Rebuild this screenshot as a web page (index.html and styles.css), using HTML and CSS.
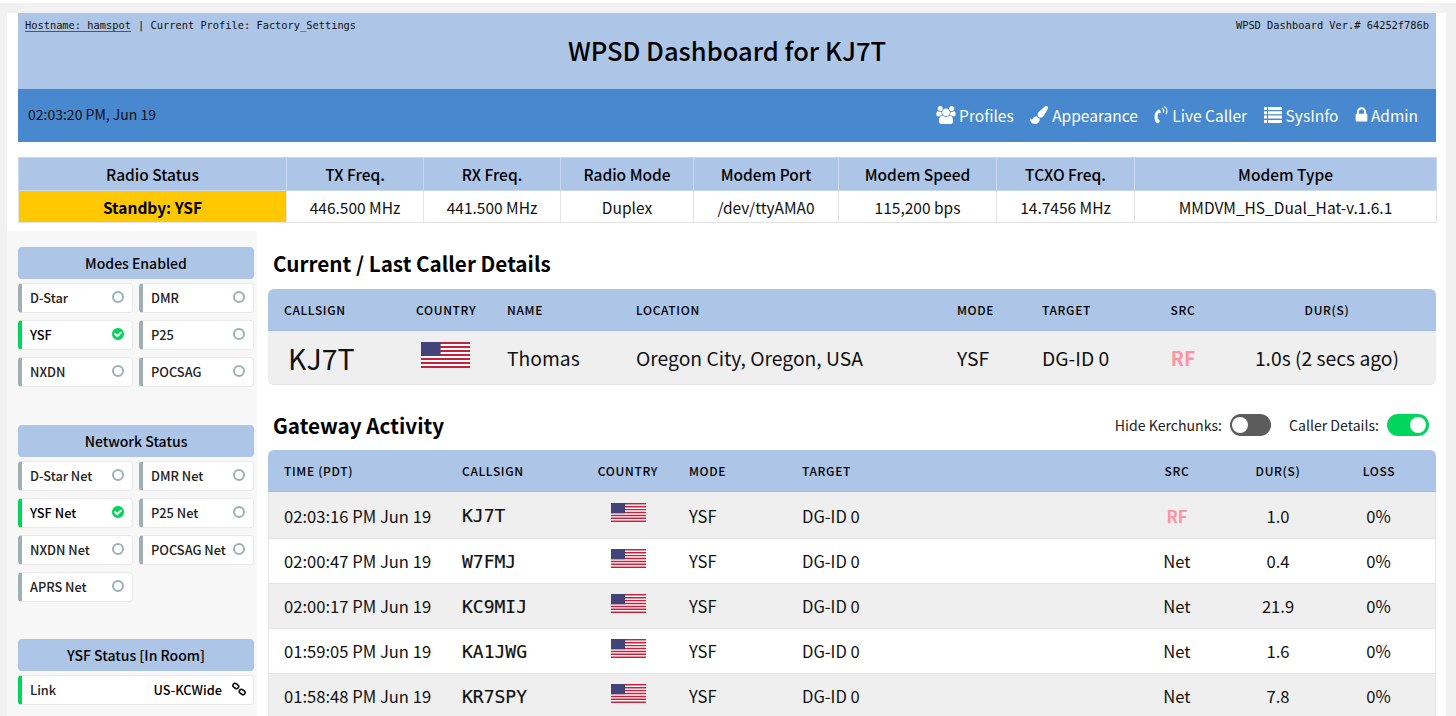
FILE: index.html
```html
<!DOCTYPE html>
<html>
<head>
    <title>WPSD Dashboard for KJ7T</title>
    <link rel="stylesheet" href="styles.css">
</head>
<body>
    <svg class="defs" width="0" height="0">
        <symbol id="flag" viewBox="0 0 190 100" preserveAspectRatio="none">
            <rect width="190" height="100" fill="#fff"/>
            <path d="M0 4h190M0 19.400h190M0 34.800h190M0 50h190M0 65.400h190M0 80.800h190M0 96h190" stroke="#c8203a" stroke-width="7.700"/>
            <rect width="76" height="54" fill="#43437a"/>
        </symbol>
        <symbol id="check" viewBox="128 128 1536 1536">
            <path fill="#00d65c" d="M1412 734q0-28-18-46l-91-90q-19-19-45-19t-45 19l-408 407-226-226q-19-19-45-19t-45 19l-91 90q-18 18-18 46 0 27 18 45l362 362q19 19 45 19 27 0 46-19l543-543q18-18 18-45zm252 162q0 209-103 385.500t-279.500 279.500-385.500 103-385.500-103-279.500-279.500-103-385.500 103-385.500 279.500-279.500 385.500-103 385.500 103 279.500 279.500 103 385.500z"/>
        </symbol>
    </svg>

    <div class="page">
        <header class="banner">
            <div class="banner-top">
                <div class="banner-meta">
                    <span><a class="host">Hostname: hamspot</a> <span class="sep">| Current Profile: Factory_Settings</span></span>
                    <span>WPSD Dashboard Ver.# 64252f786b</span>
                </div>
                <h1>WPSD Dashboard for KJ7T</h1>
            </div>
            <div class="banner-nav">
                <span class="clock">02:03:20 PM, Jun 19</span>
                <nav class="nav-links">
                    <a><svg class="nav-icon icon-users" viewBox="0 0 1920 1792"><path d="M593 896q-162 5-265 128h-134q-82 0-138-40.500t-56-118.500q0-353 124-353 6 0 43.500 21t97.500 42.500 119 21.500q67 0 133-23-5 37-5 66 0 139 81 256zm1071 637q0 120-73 189.500t-194 69.500h-874q-121 0-194-69.500t-73-189.500q0-53 3.500-103.500t14-109 26.500-108.500 43-97.500 62-81 85.500-53.500 111.500-20q10 0 43 21.500t73 48 107 48 135 21.500 135-21.500 107-48 73-48 43-21.500q61 0 111.500 20t85.500 53.500 62 81 43 97.500 26.500 108.500 14 109 3.500 103.500zm-1024-1277q0 106-75 181t-181 75-181-75-75-181 75-181 181-75 181 75 75 181zm704 384q0 159-112.500 271.500t-271.500 112.500-271.500-112.500-112.500-271.500 112.500-271.500 271.500-112.500 271.500 112.500 112.500 271.500zm576 225q0 78-56 118.500t-138 40.500h-134q-103-123-265-128 81-117 81-256 0-29-5-66 66 23 133 23 59 0 119-21.500t97.500-42.500 43.500-21q124 0 124 353zm-128-609q0 106-75 181t-181 75-181-75-75-181 75-181 181-75 181 75 75 181z"/></svg>Profiles</a>
                    <a><svg class="nav-icon" viewBox="0 0 1792 1792"><path d="M1615 0q70 0 122.500 46.500t52.500 116.500q0 63-45 151-332 629-465 752-97 91-218 91-126 0-216.500-92.500t-90.500-219.500q0-128 92-212l638-579q59-54 130-54zm-909 1034q39 76 106.500 130t150.500 76l1 71q4 213-129.500 347t-348.500 134q-123 0-218-46.500t-152.500-127.500-86.500-183-29-220q7 5 41 30t62 44.500 59 36.500 46 17q41 0 55-37 25-66 57.500-112.500t69.500-76 88-47.500 103-25.500 125-10.500z"/></svg>Appearance</a>
                    <a><svg class="nav-icon icon-phone" viewBox="0 0 14 18"><path d="M4.600 3.500C1.500 5 .5 8 .5 11c0 3 1.200 5.500 3 6.300.7.3 1.200.1 1.500-.5l.7-1.800c.2-.5 0-.9-.5-1.100l-.8-.7c-.5-.2-.7-.5-.7-1-.2-1.500-.1-3 .3-4.300.2-.5.4-.6.8-.6l1.200-.1c.5 0 .8-.4.7-.9l-.3-1.900C5.800 3.700 5.300 3.200 4.600 3.500z"/><path class="wave" d="M8 2c1.600 1 2 3 1.200 5M10.500.5c2.300 1.500 3 4.800 1.600 7.800"/></svg>Live Caller</a>
                    <a><svg class="nav-icon" viewBox="0 0 18 16"><path d="M0 0h3v3H0zM4 0h14v3H4zM0 4.300h3v3H0zM4 4.300h14v3H4zM0 8.600h3v3H0zM4 8.600h14v3H4zM0 13h3v3H0zM4 13h14v3H4z"/></svg>SysInfo</a>
                    <a><svg class="nav-icon icon-lock" viewBox="256 128 1280 1536"><path d="M640 768h512v-192q0-106-75-181t-181-75-181 75-75 181v192zm832 96v576q0 40-28 68t-68 28h-960q-40 0-68-28t-28-68v-576q0-40 28-68t68-28h32v-192q0-184 132-316t316-132 316 132 132 316v192h32q40 0 68 28t28 68z"/></svg>Admin</a>
                </nav>
            </div>
        </header>

        <table class="radio-table">
            <colgroup>
                <col class="rc-1"><col class="rc-2"><col class="rc-3"><col class="rc-4">
                <col class="rc-5"><col class="rc-6"><col class="rc-7"><col class="rc-8">
            </colgroup>
            <tr>
                <th>Radio Status</th><th>TX Freq.</th><th>RX Freq.</th><th>Radio Mode</th>
                <th>Modem Port</th><th>Modem Speed</th><th>TCXO Freq.</th><th>Modem Type</th>
            </tr>
            <tr>
                <td class="standby">Standby: YSF</td><td>446.500 MHz</td><td>441.500 MHz</td><td>Duplex</td>
                <td>/dev/ttyAMA0</td><td>115,200 bps</td><td>14.7456 MHz</td><td>MMDVM_HS_Dual_Hat-v.1.6.1</td>
            </tr>
        </table>

        <div class="content">
            <aside class="sidebar">
                <section class="side-block block-modes">
                    <h3 class="side-title">Modes Enabled</h3>
                    <div class="status-grid">
                        <div class="status"><span>D-Star</span><i class="dot"></i></div>
                        <div class="status"><span>DMR</span><i class="dot"></i></div>
                        <div class="status on"><span>YSF</span><svg class="ok"><use href="#check"/></svg></div>
                        <div class="status"><span>P25</span><i class="dot"></i></div>
                        <div class="status"><span>NXDN</span><i class="dot"></i></div>
                        <div class="status"><span>POCSAG</span><i class="dot"></i></div>
                    </div>
                </section>
                <section class="side-block block-net">
                    <h3 class="side-title">Network Status</h3>
                    <div class="status-grid">
                        <div class="status"><span>D-Star Net</span><i class="dot"></i></div>
                        <div class="status"><span>DMR Net</span><i class="dot"></i></div>
                        <div class="status on"><span>YSF Net</span><svg class="ok"><use href="#check"/></svg></div>
                        <div class="status"><span>P25 Net</span><i class="dot"></i></div>
                        <div class="status"><span>NXDN Net</span><i class="dot"></i></div>
                        <div class="status"><span>POCSAG Net</span><i class="dot"></i></div>
                        <div class="status"><span>APRS Net</span><i class="dot"></i></div>
                    </div>
                </section>
                <section class="side-block">
                    <h3 class="side-title">YSF Status [In Room]</h3>
                    <div class="status wide link-row">
                        <span>Link</span>
                        <b class="room">US-KCWide</b>
                        <svg class="chain" viewBox="0 0 14 14"><rect x="0.800" y="1.900" width="6" height="4.200" rx="2.100" transform="rotate(35 3.800 4)"/><rect x="7.200" y="7.900" width="6" height="4.200" rx="2.100" transform="rotate(35 10.200 10)"/></svg>
                    </div>
                </section>
            </aside>

            <main class="main">
                <h2 class="section-title first">Current / Last Caller Details</h2>
                <table class="data-table caller">
                    <colgroup>
                        <col class="cc-1"><col class="cc-2"><col class="cc-3"><col class="cc-4">
                        <col class="cc-5"><col class="cc-6"><col class="cc-7"><col class="cc-8">
                    </colgroup>
                    <thead>
                        <tr>
                            <th>Callsign</th><th>Country</th><th>Name</th><th>Location</th>
                            <th>Mode</th><th>Target</th><th class="mid">Src</th><th class="mid">Dur(s)</th>
                        </tr>
                    </thead>
                    <tbody>
                        <tr>
                            <td class="big-call">KJ7T</td>
                            <td><svg class="flag flag-big"><use href="#flag"/></svg></td>
                            <td>Thomas</td><td>Oregon City, Oregon, USA</td><td>YSF</td><td>DG-ID 0</td>
                            <td class="mid rf">RF</td><td class="mid">1.0s (2 secs ago)</td>
                        </tr>
                    </tbody>
                </table>

                <div class="section-head">
                    <h2 class="section-title">Gateway Activity</h2>
                    <div class="toggles">
                        <span>Hide Kerchunks:</span><i class="toggle off"></i>
                        <span class="toggle-label">Caller Details:</span><i class="toggle live"></i>
                    </div>
                </div>
                <table class="data-table activity">
                    <colgroup>
                        <col class="ac-1"><col class="ac-2"><col class="ac-3"><col class="ac-4">
                        <col class="ac-5"><col class="ac-6"><col class="ac-7"><col class="ac-8">
                    </colgroup>
                    <thead>
                        <tr>
                            <th>Time (PDT)</th><th>Callsign</th><th class="mid">Country</th><th>Mode</th>
                            <th>Target</th><th class="mid">Src</th><th class="mid">Dur(s)</th><th class="mid">Loss</th>
                        </tr>
                    </thead>
                    <tbody>
                        <tr>
                            <td>02:03:16 PM Jun 19</td><td class="call">KJ7T</td><td class="mid"><svg class="flag"><use href="#flag"/></svg></td>
                            <td>YSF</td><td>DG-ID 0</td><td class="mid rf">RF</td><td class="mid">1.0</td><td class="mid">0%</td>
                        </tr>
                        <tr>
                            <td>02:00:47 PM Jun 19</td><td class="call">W7FMJ</td><td class="mid"><svg class="flag"><use href="#flag"/></svg></td>
                            <td>YSF</td><td>DG-ID 0</td><td class="mid">Net</td><td class="mid">0.4</td><td class="mid">0%</td>
                        </tr>
                        <tr>
                            <td>02:00:17 PM Jun 19</td><td class="call">KC9MIJ</td><td class="mid"><svg class="flag"><use href="#flag"/></svg></td>
                            <td>YSF</td><td>DG-ID 0</td><td class="mid">Net</td><td class="mid">21.9</td><td class="mid">0%</td>
                        </tr>
                        <tr>
                            <td>01:59:05 PM Jun 19</td><td class="call">KA1JWG</td><td class="mid"><svg class="flag"><use href="#flag"/></svg></td>
                            <td>YSF</td><td>DG-ID 0</td><td class="mid">Net</td><td class="mid">1.6</td><td class="mid">0%</td>
                        </tr>
                        <tr>
                            <td>01:58:48 PM Jun 19</td><td class="call">KR7SPY</td><td class="mid"><svg class="flag"><use href="#flag"/></svg></td>
                            <td>YSF</td><td>DG-ID 0</td><td class="mid">Net</td><td class="mid">7.8</td><td class="mid">0%</td>
                        </tr>
                    </tbody>
                </table>
            </main>
        </div>
    </div>
</body>
</html>
```

FILE: styles.css
```css
html {
    overflow: hidden;
}
body {
    margin: 0;
    height: 716px;
    overflow: hidden;
    background: #f1f1f1;
    border-top: 3px solid #fff;
    box-sizing: border-box;
    padding: 10px 10px 0 7px;
    font-family: "Noto Sans CJK SC", "Noto Sans", sans-serif;
    font-size: 16px;
    color: #111;
}
.defs {
    position: absolute;
}
.page {
    background: #fff;
    height: 703px;
    overflow: hidden;
}

/* banner */
.banner {
    margin: 0 10px 0 11px;
}
.banner-top {
    height: 76px;
    box-sizing: border-box;
    padding: 7px 7px 0 7px;
    background: #adc6e7;
}
.banner-meta {
    display: flex;
    justify-content: space-between;
    font-family: "DejaVu Sans Mono", monospace;
    font-size: 10.350px;
    line-height: 11px;
}
.host {
    border-bottom: 1px solid #555;
}
.sep {
    margin-left: 1px;
}
.banner h1 {
    margin: 1px 0 0;
    font-size: 25.500px;
    line-height: 36px;
    font-weight: 500;
    text-align: center;
    color: #000;
}
.banner-nav {
    height: 53px;
    box-sizing: border-box;
    padding: 0 18px 0 10px;
    display: flex;
    align-items: center;
    justify-content: space-between;
    background: #4788cf;
}
.clock {
    font-size: 14px;
    padding-bottom: 4px;
}
.nav-links {
    display: flex;
    gap: 16.500px;
    font-size: 15.500px;
    color: #fff;
    padding-bottom: 2px;
}
.nav-links a {
    display: flex;
    align-items: center;
    gap: 4px;
}
.nav-icon {
    height: 18px;
    width: 18px;
    fill: #fff;
}
.icon-users {
    width: 20px;
    margin-right: -1px;
}
.icon-phone {
    width: 14px;
}
.icon-phone .wave {
    fill: none;
    stroke: #fff;
    stroke-width: 1.200;
}
.icon-lock {
    width: 13px;
    height: 16px;
    margin-right: -1px;
}

/* radio strip */
.radio-table {
    width: 1418px;
    margin: 15px 10px 8px 11px;
    border-collapse: collapse;
    table-layout: fixed;
    text-align: center;
    font-size: 15.500px;
}
.radio-table th,
.radio-table td {
    height: 31px;
    padding: 0;
    border: 1px solid #e3e3e3;
}
.radio-table th {
    padding-bottom: 1px;
    background: #adc6e7;
    font-weight: 500;
    color: #000;
    border-color: #c8d8ee;
}
.radio-table td.standby {
    background: #ffc800;
    font-weight: 700;
    color: #000;
}
.rc-1 { width: 268px; }
.rc-2 { width: 137px; }
.rc-3 { width: 137px; }
.rc-4 { width: 133px; }
.rc-5 { width: 145px; }
.rc-6 { width: 158px; }
.rc-7 { width: 138px; }
.rc-8 { width: 302px; }

/* layout below the strip */
.content {
    display: flex;
}
.sidebar {
    width: 250px;
    box-sizing: border-box;
    padding: 16px 3px 0 11px;
    background: #f7f7f7;
    height: 490px;
    flex: none;
}
.side-block {
    margin-bottom: 39px;
}
.block-modes {
    height: 178px;
    margin: 0;
}
.block-net {
    height: 214px;
    margin: 0;
}
.side-title {
    margin: 0 0 4px;
    height: 32px;
    line-height: 32px;
    border-radius: 4px;
    background: #adc6e7;
    text-align: center;
    font-size: 14px;
    font-weight: 500;
    color: #000;
}
.status-grid {
    display: grid;
    grid-template-columns: 115px 115px;
    grid-auto-rows: 30px;
    column-gap: 6px;
    row-gap: 7px;
}
.status {
    display: flex;
    align-items: center;
    justify-content: space-between;
    box-sizing: border-box;
    padding: 0 8px 2px 8px;
    background: #fff;
    border: 1px solid #eaeaea;
    border-left: 4px solid #9fb0b2;
    border-radius: 4px;
    font-size: 12.800px;
    font-weight: 500;
    color: #222;
}
.status.on,
.status.wide {
    border-left-color: #00d65c;
}
.status.on span {
    color: #000;
}
.wide {
    height: 30px;
    width: 236px;
}
.room {
    margin-left: auto;
    margin-right: 10px;
    font-weight: 500;
    color: #000;
}
.dot {
    width: 12px;
    height: 12px;
    box-sizing: border-box;
    border: 2px solid #9fb0b2;
    border-radius: 50%;
}
.ok {
    width: 12px;
    height: 12px;
}
.chain {
    width: 14px;
    height: 14px;
    fill: none;
    stroke: #111;
    stroke-width: 1.600;
    margin-right: -1px;
}

/* main column */
.main {
    flex: 1;
    min-width: 0;
    padding: 0 10px 0 11px;
}
.section-title {
    margin: 0;
    padding-left: 5px;
    font-size: 20.700px;
    line-height: 30px;
    font-weight: 700;
    color: #000;
}
.section-title.first {
    margin: 17px 0 11px;
}
.section-head {
    display: flex;
    align-items: center;
    justify-content: space-between;
    height: 32px;
    margin: 24px 0 9px;
}
.toggles {
    display: flex;
    align-items: center;
    padding-right: 7px;
    font-size: 14.100px;
    color: #222;
}
.toggle {
    position: relative;
    display: block;
    width: 41px;
    height: 22px;
    margin-left: 8px;
    border-radius: 11px;
    background: #5c5c5c;
}
.toggle::after {
    content: "";
    position: absolute;
    top: 3px;
    width: 16px;
    height: 16px;
    border-radius: 50%;
    background: #fff;
}
.toggle.off::after {
    left: 2px;
}
.toggle.live {
    width: 42px;
    background: #00d65c;
}
.toggle.live::after {
    right: 3px;
}
.toggle-label {
    margin-left: 18px;
}
.data-table {
    width: 1168px;
    border-collapse: separate;
    border-spacing: 0;
    table-layout: fixed;
    font-size: 16.600px;
}
.data-table th {
    height: 41px;
    padding: 0 0 0 16px;
    background: #adc6e7;
    border-bottom: 1px solid #a3bddf;
    text-align: left;
    text-transform: uppercase;
    font-size: 12px;
    font-weight: 500;
    letter-spacing: 0.650px;
    color: #000;
}
.data-table th:first-child {
    border-top-left-radius: 6px;
}
.data-table th:last-child {
    border-top-right-radius: 6px;
}
.data-table td {
    padding: 0 0 0 16px;
    border-bottom: 1px solid #e4e4e4;
}
.data-table th.mid,
.data-table td.mid {
    padding-left: 0;
    text-align: center;
}
.data-table td.rf {
    color: #ff94a4;
    font-weight: 700;
}
.data-table tbody tr:nth-child(odd) td {
    background: #efefef;
}
.caller td {
    height: 53px;
    font-size: 19.300px;
}
.caller tr:last-child td:first-child {
    border-bottom-left-radius: 6px;
}
.caller tr:last-child td:last-child {
    border-bottom-right-radius: 6px;
}
.data-table td.big-call {
    padding-left: 20px;
    font-size: 28.500px;
}
.activity tbody td {
    height: 44px;
}
.activity tbody tr:first-child td {
    height: 45px;
    padding-top: 1px;
}
.activity tbody td:first-child {
    border-left: 1px solid #e4e4e4;
    padding-left: 15px;
}
.activity tbody td:last-child {
    border-right: 1px solid #e4e4e4;
}
.call {
    font-family: "DejaVu Sans Mono", monospace;
    font-size: 18px;
    -webkit-text-stroke: 0.200px #111;
}
.flag {
    display: block;
    width: 35px;
    height: 19px;
    margin: -6px auto 0;
}
.flag-big {
    width: 49px;
    height: 26px;
    margin: -5px 0 0 5px;
}
.cc-1 { width: 132px; }
.cc-2 { width: 91px; }
.cc-3 { width: 129px; }
.cc-4 { width: 321px; }
.cc-5 { width: 85px; }
.cc-6 { width: 122px; }
.cc-7 { width: 70px; }
.cc-8 { width: 218px; }
.ac-1 { width: 178px; }
.ac-2 { width: 137px; }
.ac-3 { width: 90px; }
.ac-4 { width: 113px; }
.ac-5 { width: 334px; }
.ac-6 { width: 114px; }
.ac-7 { width: 88px; }
.ac-8 { width: 114px; }
```
